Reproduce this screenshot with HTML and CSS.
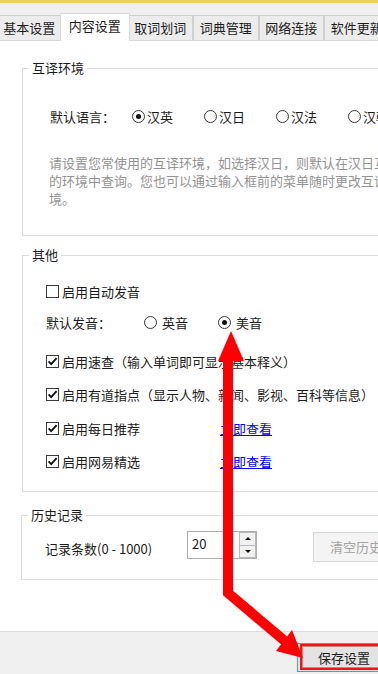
FILE: index.html
```html
<!DOCTYPE html>
<html lang="zh-CN">
<head>
<meta charset="utf-8">
<title>内容设置</title>
<link rel="stylesheet" href="styles.css">
</head>
<body>
<div class="window">
  <div class="tabbar">
    <div class="tab first">基本设置</div>
    <div class="tab active">内容设置</div>
    <div class="tab">取词划词</div>
    <div class="tab">词典管理</div>
    <div class="tab">网络连接</div>
    <div class="tab">软件更新</div>
  </div>

  <div class="content">
    <fieldset class="group g1">
      <legend>互译环境</legend>
      <div class="group-body">
        <div class="lang-row">
          <span class="lang-label">默认语言：</span>
          <span class="opt"><span class="radio on"></span>汉英</span>
          <span class="opt"><span class="radio"></span>汉日</span>
          <span class="opt"><span class="radio"></span>汉法</span>
          <span class="opt"><span class="radio"></span>汉韩</span>
        </div>
        <p class="desc">请设置您常使用的互译环境，如选择汉日，则默认在汉日互译<br>的环境中查询。您也可以通过输入框前的菜单随时更改互译环<br>境。</p>
      </div>
    </fieldset>

    <fieldset class="group g2">
      <legend>其他</legend>
      <div class="group-body rows">
        <div class="check"><span class="cb"></span><span>启用自动发音</span></div>
        <div class="sound-row">
          <span class="sound-label">默认发音：</span>
          <span class="opt wide"><span class="radio"></span>英音</span>
          <span class="opt wide"><span class="radio on"></span>美音</span>
        </div>
        <div class="check"><span class="cb"><svg viewBox="0 0 11 11" width="11" height="11"><path d="M1.6 5.4 L4.2 8.1 L9.6 2.2" fill="none" stroke="#111" stroke-width="1.9"/></svg></span><span>启用速查（输入单词即可显示基本释义）</span></div>
        <div class="check"><span class="cb"><svg viewBox="0 0 11 11" width="11" height="11"><path d="M1.6 5.4 L4.2 8.1 L9.6 2.2" fill="none" stroke="#111" stroke-width="1.9"/></svg></span><span>启用有道指点（显示人物、新闻、影视、百科等信息）</span></div>
        <div class="check"><span class="cb"><svg viewBox="0 0 11 11" width="11" height="11"><path d="M1.6 5.4 L4.2 8.1 L9.6 2.2" fill="none" stroke="#111" stroke-width="1.9"/></svg></span><span class="check-text">启用每日推荐</span><a class="link" href="#">立即查看</a></div>
        <div class="check"><span class="cb"><svg viewBox="0 0 11 11" width="11" height="11"><path d="M1.6 5.4 L4.2 8.1 L9.6 2.2" fill="none" stroke="#111" stroke-width="1.9"/></svg></span><span class="check-text">启用网易精选</span><a class="link" href="#">立即查看</a></div>
      </div>
    </fieldset>

    <fieldset class="group g3">
      <legend>历史记录</legend>
      <div class="group-body hist-row">
        <span class="hist-label">记录条数(0 - 1000)</span>
        <div class="spin-box">
          <span class="spin-val">20</span>
          <span class="spin-btns">
            <span class="spin-btn"><span class="tri up"></span></span>
            <span class="spin-btn"><span class="tri down"></span></span>
          </span>
        </div>
        <button class="clear" type="button">清空历史记录</button>
      </div>
    </fieldset>
  </div>

  <div class="footer">
    <button class="save" type="button">保存设置</button>
  </div>
</div>

<svg class="arrow" viewBox="0 0 378 674" width="378" height="674">
  <polyline points="228,356 228,593 286,642" fill="none" stroke="#ff0000" stroke-width="10" stroke-linejoin="miter"/>
  <polygon points="231,331 218,361 244,361" fill="#ff0000"/>
  <polygon points="303,658 276,651 292,630" fill="#ff0000"/>
</svg>
</body>
</html>
```

FILE: styles.css
```css
html, body {
  margin: 0;
  padding: 0;
}

body {
  width: 378px;
  height: 674px;
  overflow: hidden;
  position: relative;
  background: #f0f0f0;
  color: #1c1c1c;
  font-family: "Noto Sans CJK SC", "Noto Sans", sans-serif;
  font-size: 13px;
}

.window {
  display: flex;
  flex-direction: column;
  height: 674px;
  box-sizing: border-box;
  border-top: 3px solid #f1cd62;
}

/* tabs */
.tabbar {
  display: flex;
  align-items: flex-end;
  height: 38px;
  box-sizing: border-box;
  border-bottom: 1px solid #d9d9d9;
  flex: none;
}

.tab {
  box-sizing: border-box;
  width: 65.5px;
  height: 25px;
  flex: none;
  border: 1px solid #cfcfcf;
  border-bottom: none;
  background: #ececec;
  display: flex;
  align-items: center;
  justify-content: center;
  line-height: 16px;
  white-space: nowrap;
}

.tab.first {
  margin-left: -3.5px;
}

.tab.active {
  width: 69.5px;
  height: 28px;
  margin: 0 -2px -1px;
  padding-bottom: 3px;
  background: #fff;
  border-color: #d9d9d9;
  position: relative;
  z-index: 1;
}

/* content */
.content {
  flex: 1;
  background: #fff;
  overflow: hidden;
  border-bottom: 1px solid #dcdcdc;
}

.group {
  border: 1px solid #dcdcdc;
  padding: 0;
  margin: 0 -40px 0 22px;
  min-width: 0;
}

.group legend {
  padding: 0 3px;
  margin-left: 6px;
  line-height: 16px;
}

.g1 {
  margin-top: 19px;
}

.g1 .group-body {
  padding: 0 0 27px 27px;
}

.lang-row {
  display: flex;
  align-items: center;
  height: 20px;
  margin-top: 30px;
  white-space: nowrap;
}

.lang-label {
  width: 82px;
  flex: none;
}

.opt {
  display: flex;
  align-items: center;
  gap: 2px;
  width: 72px;
  flex: none;
}

.opt.wide {
  gap: 5px;
  width: 74px;
}

.radio {
  box-sizing: border-box;
  width: 13px;
  height: 13px;
  flex: none;
  border: 1px solid #3a3a3a;
  border-radius: 50%;
  background: #fff;
  display: inline-flex;
  align-items: center;
  justify-content: center;
}

.radio.on::after {
  content: "";
  width: 5px;
  height: 5px;
  border-radius: 50%;
  background: #111;
}

.desc {
  margin: 28px 0 0 -1px;
  line-height: 18px;
  color: #939393;
  white-space: nowrap;
}

.g2 {
  margin-top: 11px;
}

.rows {
  display: flex;
  flex-direction: column;
  gap: 13.5px;
  padding: 18px 0 19.5px 23px;
}

.check {
  display: flex;
  align-items: center;
  gap: 3px;
  height: 20px;
  white-space: nowrap;
}

.cb {
  box-sizing: border-box;
  width: 13px;
  height: 13px;
  flex: none;
  border: 1px solid #3a3a3a;
  background: #fff;
  display: inline-flex;
}

.check-text {
  width: 155px;
  flex: none;
}

.link {
  color: #0000ff;
  text-decoration: underline;
}

.sound-row {
  display: flex;
  align-items: center;
  height: 20px;
  margin: -2.5px 0 5.5px;
  white-space: nowrap;
}

.sound-label {
  width: 98px;
  flex: none;
}

.g3 {
  margin: 15px -40px 0 21px;
}

.hist-row {
  display: flex;
  align-items: flex-start;
  padding: 8px 0 17px 23px;
  white-space: nowrap;
}

.hist-label {
  width: 142px;
  flex: none;
  margin-top: 8px;
  line-height: 20px;
}

.spin-box {
  display: flex;
  box-sizing: border-box;
  width: 70px;
  height: 28px;
  flex: none;
  border: 1px solid #abadb3;
  background: #fff;
}

.spin-val {
  flex: 1;
  padding: 4px 0 0 4px;
  line-height: 16px;
}

.spin-btns {
  display: flex;
  flex-direction: column;
  width: 17px;
}

.spin-btn {
  flex: 1;
  box-sizing: border-box;
  border: 1px solid #b9b9b9;
  background: #f1f1f1;
  display: flex;
  align-items: center;
  justify-content: center;
}

.spin-btn + .spin-btn {
  border-top: none;
}

.tri {
  width: 0;
  height: 0;
  border-left: 3px solid transparent;
  border-right: 3px solid transparent;
}

.tri.up {
  border-bottom: 3px solid #111;
}

.tri.down {
  border-top: 3px solid #111;
}

.clear {
  box-sizing: border-box;
  margin: 1px 0 0 56px;
  height: 30px;
  padding: 0 16px;
  flex: none;
  border: 1px solid #d6d6d6;
  background: #f4f4f4;
  color: #a3a3a3;
  font: inherit;
  line-height: 16px;
}

/* footer */
.footer {
  height: 42px;
  flex: none;
  box-sizing: border-box;
  padding-top: 11px;
  display: flex;
  justify-content: flex-end;
  align-items: flex-start;
  background: #f0f0f0;
}

.save {
  position: relative;
  box-sizing: border-box;
  width: 88px;
  height: 29px;
  margin-right: -7px;
  padding: 0 0 0 20px;
  text-align: left;
  border: 1px solid #4a9be6;
  background: #e3e3e3;
  color: #1c1c1c;
  font: inherit;
  line-height: 16px;
}

.save::after {
  content: "";
  position: absolute;
  left: 2px;
  top: 0;
  right: 0;
  bottom: 1px;
  border: 2px solid #f21414;
  box-shadow: inset 0 0 0 1px rgba(160, 20, 20, 0.45);
}

/* annotation arrow drawn over the dialog */
.arrow {
  position: absolute;
  left: 0;
  top: 0;
  pointer-events: none;
  z-index: 10;
}
```
